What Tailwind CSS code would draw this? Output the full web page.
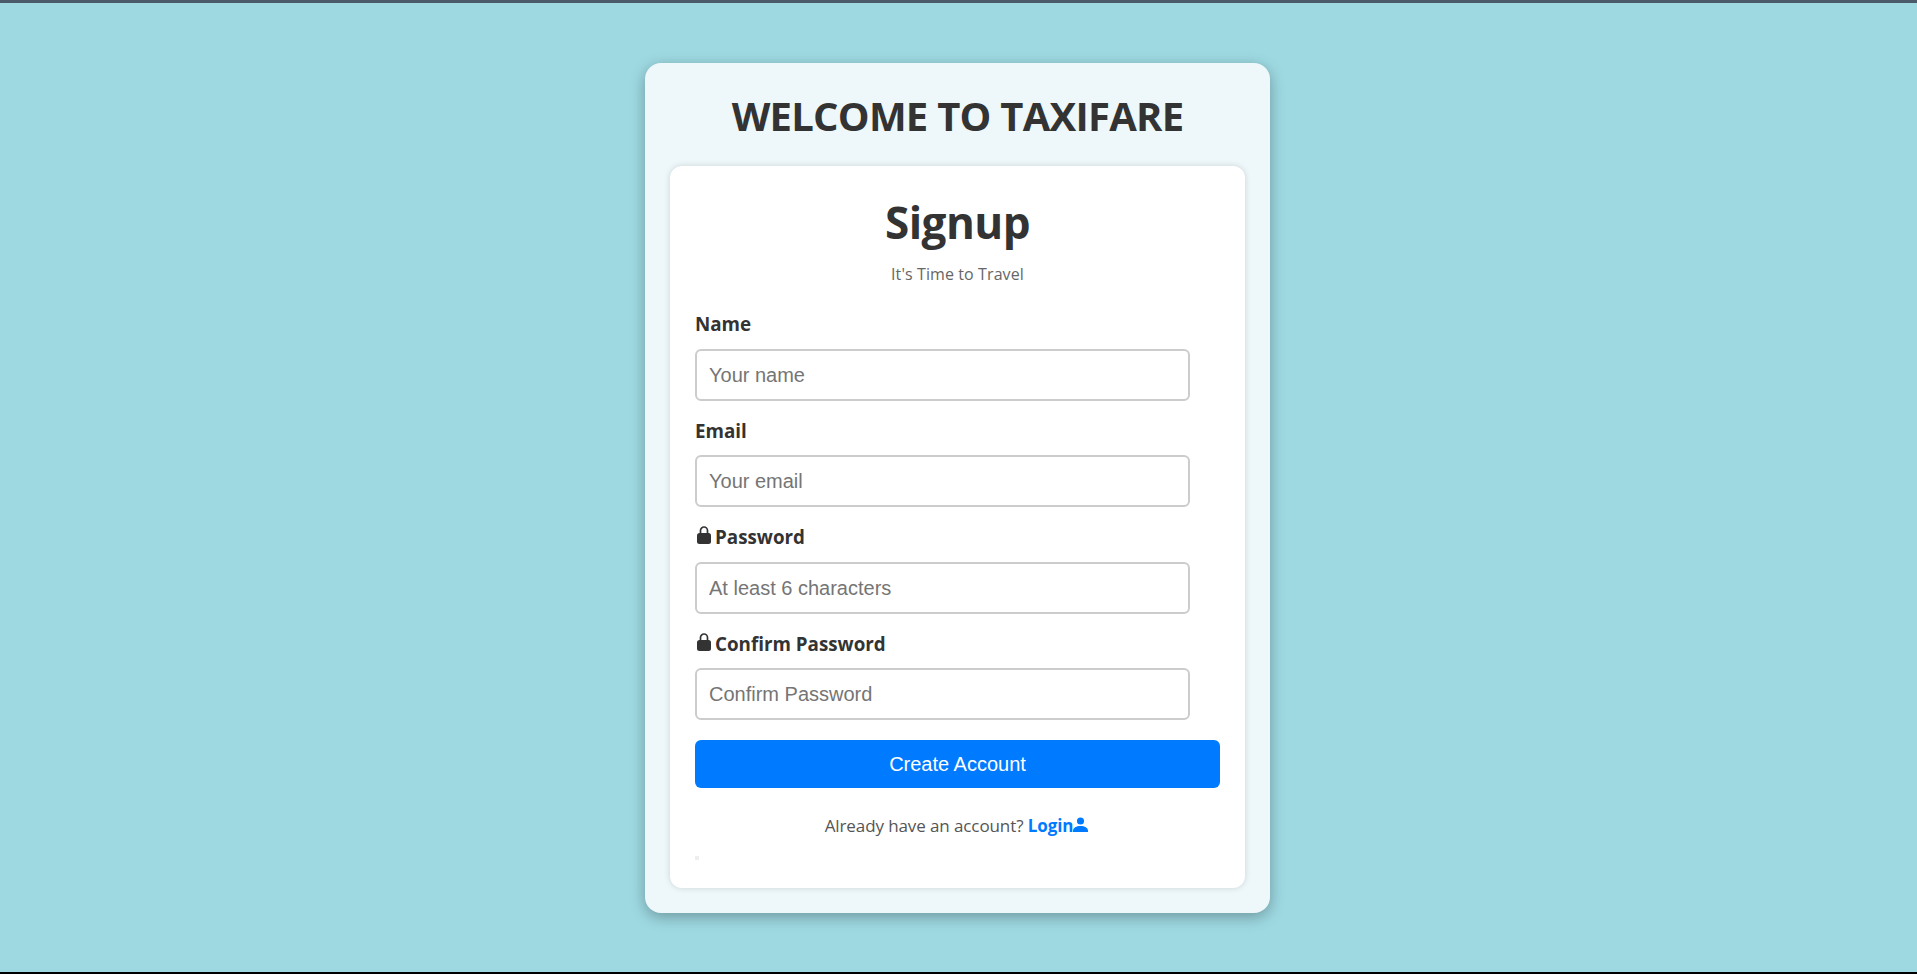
<!DOCTYPE html>
<html lang="en">
<head>
  <meta charset="UTF-8" />
  <title>Taxifare Signup</title>
  <script src="https://cdn.jsdelivr.net/npm/@tailwindcss/browser@4"></script>
</head>
<body class="h-[974px] overflow-hidden bg-[#9ed9e2] border-t-[3px] border-t-[#4a5a68] border-b-2 border-b-black font-['Open_Sans',sans-serif]">
  <div class="flex justify-center pt-[60px] pr-[2px]">
    <div class="w-[625px] h-[850px] rounded-2xl bg-[#eef8fa] shadow-[0_4px_15px_rgba(0,0,0,0.3)] p-[25px]">
      <h1 class="text-center text-[40px] leading-[54px] tracking-[-0.75px] font-bold text-[#333] pt-[1px] mb-[23px]">WELCOME TO TAXIFARE</h1>
      <div class="h-[722px] rounded-xl bg-white shadow-[0_0_6px_rgba(0,0,0,0.15)] px-[25px] pt-[26px]">
        <h2 class="text-center text-[44px] leading-[60px] tracking-[-0.5px] font-bold text-[#333]">Signup</h2>
        <p class="text-center text-base leading-[22px] tracking-[0.1px] text-[#666] mt-[11px] mb-[27px]">It's Time to Travel</p>
        <form>
          <label class="block text-[18.8px] leading-[24px] font-bold text-[#333] mb-[13px]">Name</label>
          <input class="block w-[495px] h-[52px] rounded-md border-2 border-[#ccc] px-[12px] text-xl font-['Liberation_Sans',sans-serif] placeholder:text-[#757575] mb-[18px]" placeholder="Your name" />
          <label class="block text-[18.8px] leading-[24px] font-bold text-[#333] mb-[12px]">Email</label>
          <input class="block w-[495px] h-[52px] rounded-md border-2 border-[#ccc] px-[12px] text-xl font-['Liberation_Sans',sans-serif] placeholder:text-[#757575] mb-[18px]" placeholder="Your email" />
          <label class="flex items-end text-[18.8px] leading-[24px] font-bold text-[#333] mb-[13px]">
            <svg class="w-[14px] h-[18px] ml-[2px] mr-[4px] mb-[5px]" viewBox="0 0 14 18"><path fill="none" stroke="#333" stroke-width="1.7" d="M3.5 8V4.5a3.5 3.5 0 0 1 7 0V8"/><rect y="7" width="14" height="11" rx="2.5" fill="#333"/></svg>Password</label>
          <input class="block w-[495px] h-[52px] rounded-md border-2 border-[#ccc] px-[12px] text-xl font-['Liberation_Sans',sans-serif] placeholder:text-[#757575] mb-[18px]" placeholder="At least 6 characters" />
          <label class="flex items-end text-[18.8px] leading-[24px] font-bold text-[#333] mb-[12px]">
            <svg class="w-[14px] h-[18px] ml-[2px] mr-[4px] mb-[5px]" viewBox="0 0 14 18"><path fill="none" stroke="#333" stroke-width="1.7" d="M3.5 8V4.5a3.5 3.5 0 0 1 7 0V8"/><rect y="7" width="14" height="11" rx="2.5" fill="#333"/></svg>Confirm Password</label>
          <input class="block w-[495px] h-[52px] rounded-md border-2 border-[#ccc] px-[12px] text-xl font-['Liberation_Sans',sans-serif] placeholder:text-[#757575] mb-[20px]" placeholder="Confirm Password" />
          <button type="button" class="block w-full h-[48px] rounded-md bg-[#007bff] text-white text-xl font-['Liberation_Sans',sans-serif]">Create Account</button>
        </form>
        <p class="flex justify-center items-center pr-[2px] text-[17px] leading-[24px] tracking-[-0.1px] text-[#555] mt-[26px]">Already have an account?&nbsp;<a class="font-bold text-[#007bff]">Login</a>
          <svg class="w-[15px] h-[15px] mb-[3px]" viewBox="0 0 16 16"><circle cx="8" cy="4.2" r="3.8" fill="#007bff"/><path fill="#007bff" d="M0 16v-1.5C0 11.5 3.5 9.5 8 9.5s8 2 8 5V16z"/></svg></p>
        <div class="w-1 h-1 bg-[#eee] mt-[18px]"></div>
      </div>
    </div>
  </div>
</body>
</html>
